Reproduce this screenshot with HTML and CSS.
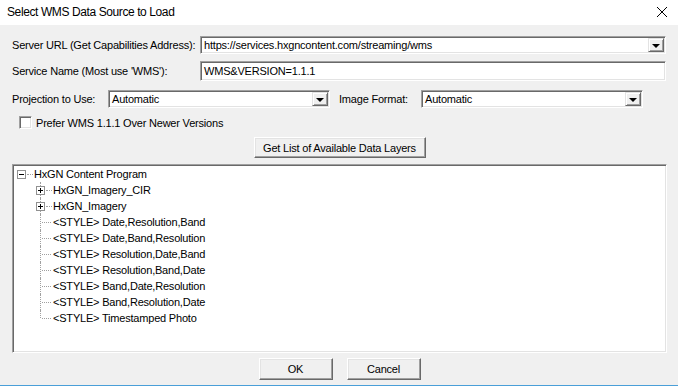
FILE: index.html
```html
<!DOCTYPE html>
<html lang="en">
<head>
    <meta charset="UTF-8">
    <title>Select WMS Data Source to Load</title>
    <link rel="stylesheet" href="styles.css">
</head>
<body>

<div class="titlebar">
    <span class="title">Select WMS Data Source to Load</span>
    <svg class="close" width="12" height="12" viewBox="0 0 12 12">
        <path d="M1 1 L11 11 M11 1 L1 11" stroke="#000" stroke-width="1" fill="none"/>
    </svg>
</div>

<div class="dialog">
    <div class="row row-url">
        <span class="lbl lbl-main">Server URL (Get Capabilities Address):</span>
        <div class="combo combo-url">
            <span class="combo-text">https://services.hxgncontent.com/streaming/wms</span>
            <span class="drop"><span class="arrow"></span></span>
        </div>
    </div>

    <div class="row row-service">
        <span class="lbl lbl-main">Service Name (Most use 'WMS'):</span>
        <div class="edit">WMS&amp;VERSION=1.1.1</div>
    </div>

    <div class="row row-proj">
        <span class="lbl lbl-proj">Projection to Use:</span>
        <div class="combo combo-proj">
            <span class="combo-text">Automatic</span>
            <span class="drop"><span class="arrow"></span></span>
        </div>
        <span class="lbl lbl-format">Image Format:</span>
        <div class="combo combo-format">
            <span class="combo-text">Automatic</span>
            <span class="drop"><span class="arrow"></span></span>
        </div>
    </div>

    <div class="row row-check">
        <span class="checkbox"></span>
        <span class="lbl">Prefer WMS 1.1.1 Over Newer Versions</span>
    </div>

    <div class="row row-get">
        <button class="btn btn-get">Get List of Available Data Layers</button>
    </div>

    <div class="tree">
        <div class="node root">
            <span class="gutter">
                <svg class="expander" width="9" height="9" viewBox="0 0 9 9">
                    <rect x="0.5" y="0.5" width="8" height="8" fill="#fff" stroke="#919191"/>
                    <path d="M2 4.5 H7" stroke="#000"/>
                </svg>
                <span class="stub"></span>
            </span>
            <span class="node-text">HxGN Content Program</span>
        </div>
        <div class="node child">
            <span class="gutter branch">
                <svg class="expander" width="9" height="9" viewBox="0 0 9 9">
                    <rect x="0.5" y="0.5" width="8" height="8" fill="#fff" stroke="#919191"/>
                    <path d="M2 4.5 H7 M4.5 2 V7" stroke="#000"/>
                </svg>
                <span class="stub"></span>
            </span>
            <span class="node-text">HxGN_Imagery_CIR</span>
        </div>
        <div class="node child">
            <span class="gutter branch">
                <svg class="expander" width="9" height="9" viewBox="0 0 9 9">
                    <rect x="0.5" y="0.5" width="8" height="8" fill="#fff" stroke="#919191"/>
                    <path d="M2 4.5 H7 M4.5 2 V7" stroke="#000"/>
                </svg>
                <span class="stub"></span>
            </span>
            <span class="node-text">HxGN_Imagery</span>
        </div>
        <div class="node child">
            <span class="gutter branch leaf"></span>
            <span class="node-text">&lt;STYLE&gt; Date,Resolution,Band</span>
        </div>
        <div class="node child">
            <span class="gutter branch leaf"></span>
            <span class="node-text">&lt;STYLE&gt; Date,Band,Resolution</span>
        </div>
        <div class="node child">
            <span class="gutter branch leaf"></span>
            <span class="node-text">&lt;STYLE&gt; Resolution,Date,Band</span>
        </div>
        <div class="node child">
            <span class="gutter branch leaf"></span>
            <span class="node-text">&lt;STYLE&gt; Resolution,Band,Date</span>
        </div>
        <div class="node child">
            <span class="gutter branch leaf"></span>
            <span class="node-text">&lt;STYLE&gt; Band,Date,Resolution</span>
        </div>
        <div class="node child">
            <span class="gutter branch leaf"></span>
            <span class="node-text">&lt;STYLE&gt; Band,Resolution,Date</span>
        </div>
        <div class="node child">
            <span class="gutter branch leaf last"></span>
            <span class="node-text">&lt;STYLE&gt; Timestamped Photo</span>
        </div>
    </div>

    <div class="footer">
        <button class="btn btn-ok">OK</button>
        <button class="btn btn-cancel">Cancel</button>
    </div>
</div>

<div class="accent"></div>

</body>
</html>
```

FILE: styles.css
```css
html, body {
    margin: 0;
    padding: 0;
}
body {
    width: 678px;
    height: 387px;
    overflow: hidden;
    background-color: #f0f0f0;
    font-family: 'Liberation Sans', Arial, sans-serif;
    font-size: 11px;
    letter-spacing: -0.2px;
    color: #000;
}

/* title bar */
.titlebar {
    height: 25px;
    background-color: #fff;
    display: flex;
    align-items: center;
    justify-content: space-between;
    padding: 0 10px 2px 7px;
    box-sizing: border-box;
}
.title {
    font-size: 12px;
    letter-spacing: -0.4px;
}
.close {
    display: block;
}

/* dialog body */
.dialog {
    padding: 0 11px 0 12px;
}
.row {
    display: flex;
    align-items: center;
}
.row-url {
    margin-top: 11px;
    height: 18px;
}
.row-service {
    margin-top: 7px;
    height: 20px;
}
.row-proj {
    margin-top: 9px;
    height: 18px;
}
.row-check {
    margin-top: 7px;
    height: 15px;
    padding-left: 7px;
}
.row-get {
    margin-top: 7px;
    justify-content: center;
}

.lbl {
    white-space: nowrap;
}
.lbl-main {
    width: 188px;
}
.lbl-proj {
    width: 96px;
}
.lbl-format {
    width: 82px;
    margin-left: 9px;
}

/* sunken fields */
.edit, .combo, .checkbox {
    background-color: #fff;
    border-top: 1px solid #a0a0a0;
    border-left: 1px solid #a0a0a0;
    border-right: 1px solid #fff;
    border-bottom: 1px solid #fff;
    box-shadow: inset 1px 1px 0 #696969, inset -1px -1px 0 #e3e3e3;
    box-sizing: border-box;
}
.edit {
    width: 466px;
    height: 20px;
    padding: 1px 3px 0;
    line-height: 16px;
}
.combo {
    height: 18px;
    display: flex;
    align-items: stretch;
    padding: 1px;
}
.combo-url {
    width: 466px;
}
.combo-proj {
    width: 222px;
}
.combo-format {
    width: 222px;
}
.combo-text {
    flex: 1;
    padding-left: 2px;
    line-height: 14px;
    white-space: nowrap;
    overflow: hidden;
}
.drop {
    width: 16px;
    background-color: #f0f0f0;
    border-top: 1px solid #e3e3e3;
    border-left: 1px solid #e3e3e3;
    border-right: 1px solid #696969;
    border-bottom: 1px solid #696969;
    box-shadow: inset 1px 1px 0 #fff, inset -1px -1px 0 #a0a0a0;
    box-sizing: border-box;
    display: flex;
    align-items: center;
    justify-content: center;
}
.arrow {
    width: 0;
    height: 0;
    border-left: 4px solid transparent;
    border-right: 4px solid transparent;
    border-top: 4px solid #000;
    margin-top: 1px;
}

.checkbox {
    width: 13px;
    height: 13px;
    margin-right: 4px;
}

/* raised buttons */
.btn {
    font-family: inherit;
    font-size: 11px;
    letter-spacing: -0.2px;
    color: #000;
    background-color: #f0f0f0;
    border-top: 1px solid #fff;
    border-left: 1px solid #fff;
    border-right: 1px solid #696969;
    border-bottom: 1px solid #696969;
    box-shadow: inset -1px -1px 0 #a0a0a0, inset 1px 1px 0 #e3e3e3;
    box-sizing: border-box;
    padding: 0;
    cursor: pointer;
}
.btn-get {
    width: 172px;
    height: 21px;
}

/* tree view */
.tree {
    margin-top: 6px;
    width: 655px;
    height: 189px;
    box-sizing: border-box;
    background-color: #fff;
    border-top: 1px solid #a0a0a0;
    border-left: 1px solid #a0a0a0;
    border-right: 1px solid #fff;
    border-bottom: 1px solid #fff;
    box-shadow: inset 1px 1px 0 #696969, inset -1px -1px 0 #e3e3e3;
    padding: 1px;
}
.node {
    height: 16px;
    display: flex;
    align-items: center;
    white-space: nowrap;
}
.root {
    padding-left: 3px;
}
.root .gutter {
    width: 17px;
}
.child {
    padding-left: 22px;
}
.gutter {
    position: relative;
    width: 17px;
    height: 16px;
    display: flex;
    align-items: center;
    flex-shrink: 0;
}
.expander {
    display: block;
    position: relative;
    z-index: 1;
    flex-shrink: 0;
}
.stub {
    width: 6px;
    margin-left: 1px;
    border-top: 1px dotted #a0a0a0;
    height: 0;
}
.branch::before {
    content: "";
    position: absolute;
    left: 4px;
    top: 0;
    bottom: 0;
    border-left: 1px dotted #a0a0a0;
}
.leaf::after {
    content: "";
    position: absolute;
    left: 6px;
    top: 8px;
    width: 9px;
    border-top: 1px dotted #a0a0a0;
}
.last::before {
    bottom: 8px;
}

/* footer */
.footer {
    margin-top: 5px;
    display: flex;
    justify-content: center;
    gap: 14px;
}
.btn-ok, .btn-cancel {
    width: 74px;
    height: 22px;
}

.accent {
    margin-top: 5px;
    height: 1px;
    background-color: #4a9fd8;
    border-bottom: 1px solid #fff;
}
```
